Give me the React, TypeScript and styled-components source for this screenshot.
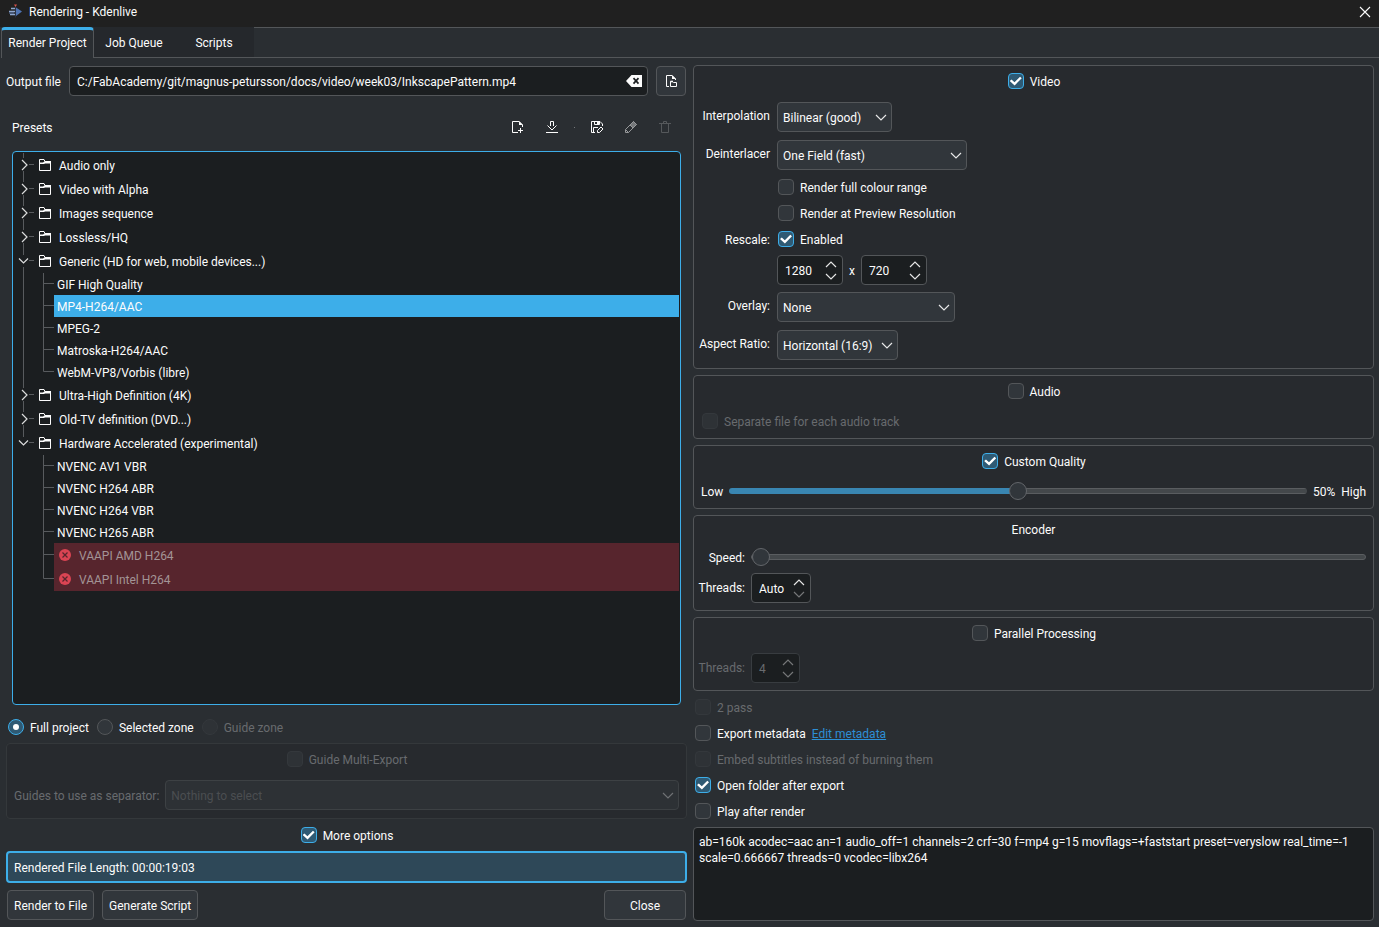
import React from "react";
import styled, { createGlobalStyle, css } from "styled-components";

const c = {
  window: "#2a2e32",
  group: "#272a2e",
  view: "#1b1e20",
  control: "#31363b",
  border: "#535659",
  borderOff: "#383c40",
  text: "#fcfcfc",
  textOff: "#686b6e",
  accent: "#3daee9",
  accentFill: "#2f5a74",
};

const Global = createGlobalStyle`
  *, *::before, *::after { box-sizing: border-box; }
  body { margin: 0; background: ${c.window}; }
  body, button, input, select, textarea {
    font: 12px/16px Roboto, "Noto Sans", sans-serif;
    color: ${c.text};
  }
`;

const Window = styled.div`
  display: flex;
  flex-direction: column;
  min-height: 100vh;
  background: ${c.window};
`;

const TitleBar = styled.header`
  display: flex;
  align-items: center;
  gap: 6px;
  height: 27px;
  padding: 0 8px 4px 8px;
  background: #202020;
`;

const Title = styled.h1`
  flex: 1;
  margin: 0;
  font-size: 12px;
  font-weight: 400;
`;

const IconButton = styled.button`
  display: flex;
  align-items: center;
  justify-content: center;
  padding: 0;
  border: 0;
  background: none;
  color: ${c.text};
`;

const TabBar = styled.nav`
  display: flex;
  height: 31px;
  padding-left: 1px;
`;

const Tab = styled.button<{ $active?: boolean }>`
  min-width: ${(p) => (p.$active ? "93px" : "80px")};
  padding: 2px 6px 0;
  border: 0;
  border-bottom: 1px solid ${c.border};
  background: #25282c;
  white-space: nowrap;
  ${(p) =>
    p.$active &&
    css`
      border: 1px solid ${c.border};
      border-top: 3px solid ${c.accent};
      border-bottom: 0;
      border-radius: 4px 4px 0 0;
      padding: 0 6px 2px;
      background: ${c.window};
    `}
`;

const TabFiller = styled.div`
  flex: 1;
  border-top: 1px solid ${c.border};
  border-bottom: 1px solid ${c.border};
`;

const Main = styled.main`
  flex: 1;
  display: grid;
  grid-template-columns: minmax(0, 1fr) minmax(0, 1fr);
  column-gap: 6px;
  padding: 7px 5px 6px 6px;
`;

const Column = styled.section`
  display: flex;
  flex-direction: column;
`;

/* Text that shares a line with an icon or a tick box sits slightly below its middle. */
const Caption = styled.span`
  padding-top: 2px;
`;

const OutputRow = styled.div`
  display: flex;
  align-items: center;
  gap: 8px;
  padding: 1px 1px 0 0;
  white-space: nowrap;
`;

const PathField = styled.div`
  flex: 1;
  display: flex;
  align-items: center;
  height: 30px;
  padding-right: 5px;
  border: 1px solid ${c.border};
  border-radius: 4px;
  background: ${c.view};
`;

const PathInput = styled.input`
  flex: 1;
  min-width: 0;
  padding: 2px 7px 0;
  border: 0;
  outline: 0;
  background: none;
`;

const PushButton = styled.button<{ $width?: number }>`
  display: flex;
  align-items: center;
  justify-content: center;
  height: 30px;
  min-width: ${(p) => p.$width ?? 30}px;
  padding: 0 6px;
  border: 1px solid ${c.border};
  border-radius: 4px;
  background: ${c.control};
  white-space: nowrap;
`;

const PresetBar = styled.div`
  display: flex;
  align-items: center;
  gap: 4px;
  height: 30px;
  margin: 16px 7px 9px 6px;
`;

const PresetTitle = styled.h2`
  flex: 1;
  margin: 0;
  padding-top: 2px;
  font-size: 12px;
  font-weight: 400;
`;

const ToolButton = styled(IconButton)<{ $tone?: string }>`
  width: 30px;
  height: 30px;
  color: ${(p) => p.$tone ?? c.text};
`;

const ToolDot = styled.span`
  width: 7px;
  display: flex;
  justify-content: center;
  &::before {
    content: "";
    width: 1px;
    height: 1px;
    background: #74777a;
  }
`;

const Tree = styled.ul`
  flex: 1;
  margin: 0 6px;
  padding: 1px;
  list-style: none;
  border: 1px solid ${c.accent};
  border-radius: 4px;
  background: ${c.view};
`;

const TreeRow = styled.li<{ $tall?: boolean }>`
  display: flex;
  height: ${(p) => (p.$tall ? 24 : 22)}px;
`;

const TreeLabel = styled.span<{ $kind: "folder" | "item" | "selected" | "error" }>`
  flex: 1;
  display: flex;
  align-items: center;
  gap: 6px;
  padding-left: 3px;
  ${(p) => p.$kind === "selected" && `background: ${c.accent};`}
  ${(p) => p.$kind === "error" && "background: #57252d; color: #a39496;"}
`;

const Branch = styled.svg`
  flex: none;
  fill: none;
  stroke: #585b5e;
`;

const ZoneRow = styled.div`
  display: flex;
  gap: 7px;
  margin: 13px 0 7px 1px;
`;

const OptionLabel = styled.label<{ $off?: boolean }>`
  display: flex;
  align-items: center;
  gap: 6px;
  height: 18px;
  padding-left: 1px;
  white-space: nowrap;
  color: ${(p) => (p.$off ? c.textOff : c.text)};
`;

const Tick = styled.input`
  appearance: none;
  flex: none;
  display: grid;
  place-items: center;
  width: 16px;
  height: 16px;
  margin: 0;
  border: 1px solid ${c.border};
  border-radius: ${(p) => (p.type === "radio" ? "50%" : "4px")};
  background: ${c.control};
  &:checked {
    border-color: ${c.accent};
    background: ${c.accentFill};
  }
  &:disabled {
    border-color: #34383c;
    background: #2e3236;
  }
  &:checked::before {
    content: "";
    background: #fff;
    ${(p) =>
      p.type === "radio"
        ? "width: 6px; height: 6px; border-radius: 50%;"
        : "width: 12px; height: 10px; clip-path: polygon(0 50%, 15% 35%, 40% 62%, 86% 8%, 100% 22%, 41% 94%);"}
  }
`;

const Group = styled.fieldset<{ $off?: boolean; $bottom?: number }>`
  display: flex;
  flex-direction: column;
  min-width: 0;
  margin: 0 0 6px;
  padding: 6px 7px ${(p) => p.$bottom ?? 8}px;
  border: 1px solid ${(p) => (p.$off ? "#34383b" : c.border)};
  border-radius: 4px;
  background: ${c.group};
`;

const GroupTitle = styled.div<{ $gap?: number }>`
  display: flex;
  justify-content: center;
  margin-bottom: ${(p) => p.$gap ?? 12}px;
`;

const FormRow = styled.div<{ $tight?: boolean }>`
  display: grid;
  grid-template-columns: 69px minmax(0, 1fr);
  column-gap: 7px;
  margin-bottom: ${(p) => (p.$tight ? 7 : 8)}px;
  &:last-child {
    margin-bottom: 0;
  }
`;

const FormLabel = styled.label<{ $line: number }>`
  justify-self: end;
  white-space: nowrap;
  line-height: ${(p) => p.$line}px;
`;

const FormCell = styled.div`
  grid-column: 2;
  display: flex;
  flex-direction: column;
  align-items: flex-start;
  gap: 7px;
`;

const FormRows = styled.div<{ $off?: boolean }>`
  display: grid;
  grid-template-columns: 44px minmax(0, 1fr);
  gap: 7px 6px;
  align-items: center;
  color: ${(p) => (p.$off ? c.textOff : c.text)};
  label {
    justify-self: end;
    white-space: nowrap;
  }
`;

const Inline = styled.div<{ $off?: boolean }>`
  display: flex;
  align-items: center;
  gap: 6px;
  white-space: nowrap;
  color: ${(p) => (p.$off ? c.textOff : c.text)};
`;

const SelectBox = styled.div<{ $width?: number; $off?: boolean }>`
  position: relative;
  display: flex;
  ${(p) => (p.$width ? `width: ${p.$width}px;` : "flex: 1;")}
  color: ${(p) => (p.$off ? "#77797b" : c.text)};
  select {
    appearance: none;
    width: 100%;
    height: 30px;
    padding: 2px 22px 0 5px;
    border: 1px solid ${(p) => (p.$off ? "#3d4144" : c.border)};
    border-radius: 4px;
    background: ${(p) => (p.$off ? "#2d3135" : c.control)};
    color: ${(p) => (p.$off ? "#4b4e51" : c.text)};
    opacity: 1;
  }
  svg {
    position: absolute;
    right: 5px;
    top: 12px;
    pointer-events: none;
  }
`;

const SpinBox = styled.div<{ $width: number; $off?: boolean }>`
  display: flex;
  align-items: center;
  width: ${(p) => p.$width}px;
  height: 30px;
  padding: 0 5px 0 7px;
  border: 1px solid ${(p) => (p.$off ? c.borderOff : c.border)};
  border-radius: 4px;
  background: ${c.view};
  input {
    flex: 1;
    min-width: 0;
    padding: 2px 0 0;
    border: 0;
    outline: 0;
    background: none;
    color: ${(p) => (p.$off ? c.textOff : c.text)};
  }
`;

const SpinArrows = styled.div`
  display: flex;
  flex-direction: column;
  gap: 5px;
`;

const Range = styled.input<{ $fill: number }>`
  appearance: none;
  flex: 1;
  min-width: 0;
  height: 18px;
  margin: 0;
  background: none;
  &::-webkit-slider-runnable-track {
    height: 6px;
    border: 1px solid #5a5d60;
    border-radius: 3px;
    background: #44484b;
    ${(p) =>
      p.$fill > 0 &&
      `border: 0; background: linear-gradient(90deg, #3986b2 ${p.$fill}%, transparent ${p.$fill}%),
        linear-gradient(#5a5d60 1px, #44484b 1px 5px, #5a5d60 5px);`}
  }
  &::-webkit-slider-thumb {
    appearance: none;
    width: 18px;
    height: 18px;
    margin-top: ${(p) => (p.$fill > 0 ? -6 : -7)}px;
    border: 1px solid #63666a;
    border-radius: 50%;
    background: ${c.control};
  }
`;

const Options = styled.div`
  display: flex;
  flex-direction: column;
  gap: 8px;
  margin: 1px 0 7px 1px;
`;

const MetaLink = styled.a`
  padding-top: 2px;
  color: #2d8fd5;
`;

const Params = styled.textarea`
  flex: 1;
  width: 100%;
  min-height: 94px;
  padding: 6px 0 6px 5px;
  resize: none;
  border: 1px solid ${c.border};
  border-radius: 4px;
  outline: 0;
  background: ${c.view};
`;

const Message = styled.output`
  display: flex;
  align-items: center;
  height: 32px;
  margin: 7px 0;
  padding: 0 6px;
  border: 2px solid ${c.accent};
  border-radius: 4px;
  background: #2e4858;
`;

const MoreRow = styled.div`
  display: flex;
  justify-content: center;
  margin-top: 1px;
`;

const Actions = styled.div`
  display: flex;
  gap: 8px;
  padding: 0 1px 1px;
`;

const Spacer = styled.span`
  flex: 1;
`;

const LogoIcon = () => (
  <svg width="15" height="15" viewBox="0 0 15 15" aria-hidden="true">
    <path d="M3 4.5h5M1 7.5h7M2 10.5h6" stroke="#8fa6cc" strokeWidth="1.6" />
    <path d="M1 9h5" stroke="#5670a3" />
    <path d="M8 3.5 14 7.5 8 12z" fill="#4f74b3" />
    <path d="M7.5 2v11.5" stroke="#2c3344" />
    <path d="M6 0.5h3L7.5 3z" fill="#d9534a" />
  </svg>
);

const CloseIcon = () => (
  <svg width="12" height="12" viewBox="0 0 12 12" aria-hidden="true">
    <path d="M1 1 11 11M11 1 1 11" stroke="currentColor" strokeWidth="1.1" />
  </svg>
);

const ClearIcon = () => (
  <svg width="16" height="12" viewBox="0 0 16 12" aria-hidden="true">
    <path d="M5.5 0H16V12H5.5L0 6z" fill="#fcfcfc" />
    <path d="M7.5 3.2 12.5 8.6M12.5 3.2 7.5 8.6" stroke="#1b1e20" strokeWidth="1.7" />
  </svg>
);

const FileFolderIcon = () => (
  <svg width="16" height="16" viewBox="0 0 16 16" fill="none" stroke="currentColor" aria-hidden="true">
    <path d="M6 13.5H3.5V2.5H9L12.5 6V7" />
    <path d="M9 2v4h4z" fill="currentColor" stroke="none" />
    <path d="M7.5 13.5V8.5h2l1 1h3v4z" />
    <path d="M7.5 8.5h2.5" strokeWidth="1.6" />
  </svg>
);

const NewFileIcon = () => (
  <svg width="16" height="16" viewBox="0 0 16 16" fill="none" stroke="currentColor" aria-hidden="true">
    <path d="M8 13.5H2.5V2.5H9L12.5 6V8" />
    <path d="M9 2v4h4z" fill="currentColor" stroke="none" />
    <path d="M10.5 9v5M8 11.5h5" />
  </svg>
);

const ImportIcon = () => (
  <svg width="16" height="16" viewBox="0 0 16 16" fill="none" stroke="currentColor" aria-hidden="true">
    <path d="M6.5 7V2.5h3V7M3.5 6.5 8 11l4.5-4.5M2 13.5h12" />
  </svg>
);

const SaveEditIcon = () => (
  <svg width="16" height="16" viewBox="0 0 16 16" fill="none" stroke="currentColor" aria-hidden="true">
    <path d="M6 13.5H2.5V2.5H11L13.5 5V7" />
    <path d="M5.5 2.5v3h5v-3" />
    <path d="M8 3h2v2H8z" fill="currentColor" stroke="none" />
    <path d="M4.5 13V8.5H9" />
    <path d="M8.5 13.5V11.5L12 8l2 2-3.5 3.5z" />
  </svg>
);

const PencilIcon = () => (
  <svg width="16" height="16" viewBox="0 0 16 16" fill="none" stroke="currentColor" aria-hidden="true">
    <path d="M2.5 13.5V10.5L10.5 2.5l3 3-8 8z" />
    <path d="M7 6 10.5 2.5l3 3L10 9z" fill="currentColor" fillOpacity="0.7" />
    <path d="M2.5 10.5l3 3" />
  </svg>
);

const TrashIcon = () => (
  <svg width="16" height="16" viewBox="0 0 16 16" fill="none" stroke="currentColor" aria-hidden="true">
    <path d="M2 4.5h12M6.5 4V2.5h3V4M4.5 5v8.5h7V5" />
  </svg>
);

const FolderIcon = () => (
  <svg width="16" height="16" viewBox="0 0 16 16" fill="none" stroke="currentColor" aria-hidden="true">
    <path d="M2.5 13.5V2.5H7l1 2h5.5v9z" />
    <path d="M2 7V5.6H6L8 4h6v2.4H8L7 7z" fill="currentColor" stroke="none" />
  </svg>
);

const ErrorIcon = () => (
  <svg width="16" height="16" viewBox="0 0 16 16" aria-hidden="true">
    <circle cx="8" cy="8" r="6" fill="#da4453" />
    <path d="M5.5 5.5l5 5M10.5 5.5l-5 5" stroke="#57252d" strokeWidth="1.2" />
  </svg>
);

const Chevron = ({ up, dim }: { up?: boolean; dim?: boolean }) => (
  <svg width="12" height="7" viewBox="0 0 12 7" fill="none" stroke="currentColor" strokeWidth="1.2" opacity={dim ? 0.4 : 0.9} aria-hidden="true">
    <path d={up ? "M1 6 6 1l5 5" : "M1 1l5 5 5-5"} />
  </svg>
);

const FolderBranch = ({ open, last }: { open?: boolean; last?: boolean }) => (
  <Branch width="20" height="24" aria-hidden="true">
    <path d={open ? "M9.5 0v6M15 11.5h5" : "M9.5 0v5M15 11.5h5"} />
    {!last && <path d="M9.5 18v6" />}
    <path stroke="#dcdddd" strokeWidth="1.2" d={open ? "M5 9.5l4.5 4.5L14 9.5" : "M8 7l5 5-5 5"} />
  </Branch>
);

const ItemBranch = ({ tall, through, last }: { tall?: boolean; through?: boolean; last?: boolean }) => {
  const h = tall ? 24 : 22;
  const mid = h / 2 - 0.5;
  return (
    <Branch width="40" height={h} aria-hidden="true">
      {through && <path d={`M9.5 0v${h}`} />}
      <path d={`M29.5 0v${last ? mid : h}M29.5 ${mid}h10.5`} />
    </Branch>
  );
};

const Check = ({ label, checked, off, type = "checkbox", name }: { label: string; checked?: boolean; off?: boolean; type?: string; name?: string }) => (
  <OptionLabel $off={off}>
    <Tick type={type} name={name} defaultChecked={checked} disabled={off} />
    <Caption>{label}</Caption>
  </OptionLabel>
);

const Combo = ({ id, value, width, off }: { id: string; value: string; width?: number; off?: boolean }) => (
  <SelectBox $width={width} $off={off}>
    <select id={id} disabled={off}>
      <option>{value}</option>
    </select>
    <Chevron />
  </SelectBox>
);

const Spin = ({ id, label, value, width, off, atMin }: { id: string; label?: string; value: string; width: number; off?: boolean; atMin?: boolean }) => (
  <SpinBox $width={width} $off={off}>
    <input id={id} aria-label={label} defaultValue={value} disabled={off} />
    <SpinArrows>
      <IconButton aria-label="Increase" disabled={off}>
        <Chevron up dim={off} />
      </IconButton>
      <IconButton aria-label="Decrease" disabled={off || atMin}>
        <Chevron dim={off || atMin} />
      </IconButton>
    </SpinArrows>
  </SpinBox>
);

interface Preset {
  name: string;
  selected?: boolean;
  error?: boolean;
}

const presetGroups: { name: string; items?: Preset[] }[] = [
  { name: "Audio only" },
  { name: "Video with Alpha" },
  { name: "Images sequence" },
  { name: "Lossless/HQ" },
  {
    name: "Generic (HD for web, mobile devices...)",
    items: [
      { name: "GIF High Quality" },
      { name: "MP4-H264/AAC", selected: true },
      { name: "MPEG-2" },
      { name: "Matroska-H264/AAC" },
      { name: "WebM-VP8/Vorbis (libre)" },
    ],
  },
  { name: "Ultra-High Definition (4K)" },
  { name: "Old-TV definition (DVD...)" },
  {
    name: "Hardware Accelerated (experimental)",
    items: [
      { name: "NVENC AV1 VBR" },
      { name: "NVENC H264 ABR" },
      { name: "NVENC H264 VBR" },
      { name: "NVENC H265 ABR" },
      { name: "VAAPI AMD H264", error: true },
      { name: "VAAPI Intel H264", error: true },
    ],
  },
];

const PresetTree = () => (
  <Tree>
    {presetGroups.map((g, gi) => {
      const lastGroup = gi === presetGroups.length - 1;
      return (
        <React.Fragment key={g.name}>
          <TreeRow $tall>
            <FolderBranch open={!!g.items} last={lastGroup} />
            <TreeLabel $kind="folder">
              <FolderIcon />
              <Caption>{g.name}</Caption>
            </TreeLabel>
          </TreeRow>
          {g.items?.map((it, i) => (
            <TreeRow key={it.name} $tall={it.error}>
              <ItemBranch tall={it.error} through={!lastGroup} last={i === g.items!.length - 1} />
              <TreeLabel $kind={it.error ? "error" : it.selected ? "selected" : "item"}>
                {it.error && <ErrorIcon />}
                <Caption>{it.name}</Caption>
              </TreeLabel>
            </TreeRow>
          ))}
        </React.Fragment>
      );
    })}
  </Tree>
);

export default function App() {
  return (
    <Window>
      <Global />
      <TitleBar>
        <LogoIcon />
        <Title>Rendering - Kdenlive</Title>
        <IconButton aria-label="Close window">
          <CloseIcon />
        </IconButton>
      </TitleBar>
      <TabBar>
        <Tab $active>Render Project</Tab>
        <Tab>Job Queue</Tab>
        <Tab>Scripts</Tab>
        <TabFiller />
      </TabBar>
      <Main>
        <Column>
          <OutputRow>
            <Caption as="label" htmlFor="output">Output file</Caption>
            <PathField>
              <PathInput id="output" defaultValue="C:/FabAcademy/git/magnus-petursson/docs/video/week03/InkscapePattern.mp4" />
              <IconButton aria-label="Clear">
                <ClearIcon />
              </IconButton>
            </PathField>
            <PushButton aria-label="Select output file">
              <FileFolderIcon />
            </PushButton>
          </OutputRow>
          <PresetBar>
            <PresetTitle>Presets</PresetTitle>
            <ToolButton aria-label="New preset"><NewFileIcon /></ToolButton>
            <ToolButton aria-label="Download presets"><ImportIcon /></ToolButton>
            <ToolDot />
            <ToolButton aria-label="Save preset"><SaveEditIcon /></ToolButton>
            <ToolButton aria-label="Edit preset" $tone="#96989a"><PencilIcon /></ToolButton>
            <ToolButton aria-label="Delete preset" $tone="#55585b"><TrashIcon /></ToolButton>
          </PresetBar>
          <PresetTree />
          <ZoneRow>
            <Check type="radio" name="zone" label="Full project" checked />
            <Check type="radio" name="zone" label="Selected zone" />
            <Check type="radio" name="zone" label="Guide zone" off />
          </ZoneRow>
          <Group $off>
            <GroupTitle>
              <Check label="Guide Multi-Export" off />
            </GroupTitle>
            <Inline $off>
              <Caption as="label" htmlFor="guides">Guides to use as separator:</Caption>
              <Combo id="guides" value="Nothing to select" off />
            </Inline>
          </Group>
          <MoreRow>
            <Check label="More options" checked />
          </MoreRow>
          <Message>
            <Caption>Rendered File Length: 00:00:19:03</Caption>
          </Message>
          <Actions>
            <PushButton $width={86}><Caption>Render to File</Caption></PushButton>
            <PushButton $width={94}><Caption>Generate Script</Caption></PushButton>
            <Spacer />
            <PushButton $width={82}><Caption>Close</Caption></PushButton>
          </Actions>
        </Column>

        <Column>
          <Group>
            <GroupTitle>
              <Check label="Video" checked />
            </GroupTitle>
            <FormRow>
              <FormLabel htmlFor="interp" $line={28}>Interpolation</FormLabel>
              <Combo id="interp" value="Bilinear (good)" width={115} />
            </FormRow>
            <FormRow>
              <FormLabel htmlFor="deint" $line={28}>Deinterlacer</FormLabel>
              <Combo id="deint" value="One Field (fast)" width={190} />
            </FormRow>
            <FormRow>
              <FormCell><Check label="Render full colour range" /></FormCell>
            </FormRow>
            <FormRow>
              <FormCell><Check label="Render at Preview Resolution" /></FormCell>
            </FormRow>
            <FormRow $tight>
              <FormLabel htmlFor="rescale-w" $line={20}>Rescale:</FormLabel>
              <FormCell>
                <Check label="Enabled" checked />
                <Inline>
                  <Spin id="rescale-w" value="1280" width={66} />
                  <Caption>x</Caption>
                  <Spin id="rescale-h" label="Rescale height" value="720" width={66} />
                </Inline>
              </FormCell>
            </FormRow>
            <FormRow>
              <FormLabel htmlFor="overlay" $line={28}>Overlay:</FormLabel>
              <Combo id="overlay" value="None" width={178} />
            </FormRow>
            <FormRow>
              <FormLabel htmlFor="aspect" $line={28}>Aspect Ratio:</FormLabel>
              <Combo id="aspect" value="Horizontal (16:9)" width={121} />
            </FormRow>
          </Group>

          <Group>
            <GroupTitle>
              <Check label="Audio" />
            </GroupTitle>
            <Inline $off>
              <Check label="Separate file for each audio track" off />
            </Inline>
          </Group>

          <Group>
            <GroupTitle>
              <Check label="Custom Quality" checked />
            </GroupTitle>
            <Inline>
              <Caption as="label" htmlFor="quality">Low</Caption>
              <Range id="quality" type="range" min={0} max={100} defaultValue={50} $fill={50} />
              <Caption>50%</Caption>
              <Caption>High</Caption>
            </Inline>
          </Group>

          <Group $bottom={7}>
            <GroupTitle $gap={10}>Encoder</GroupTitle>
            <FormRows>
              <Caption as="label" htmlFor="speed">Speed:</Caption>
              <Range id="speed" type="range" min={0} max={10} defaultValue={0} $fill={0} />
              <label htmlFor="threads">Threads:</label>
              <Spin id="threads" value="Auto" width={60} atMin />
            </FormRows>
          </Group>

          <Group $bottom={7}>
            <GroupTitle $gap={11}>
              <Check label="Parallel Processing" />
            </GroupTitle>
            <FormRows $off>
              <label htmlFor="pthreads">Threads:</label>
              <Spin id="pthreads" value="4" width={49} off />
            </FormRows>
          </Group>

          <Options>
            <Check label="2 pass" off />
            <Inline>
              <Check label="Export metadata" />
              <MetaLink href="#metadata">Edit metadata</MetaLink>
            </Inline>
            <Check label="Embed subtitles instead of burning them" off />
            <Check label="Open folder after export" checked />
            <Check label="Play after render" />
          </Options>
          <Params
            aria-label="Encoding parameters"
            defaultValue="ab=160k acodec=aac an=1 audio_off=1 channels=2 crf=30 f=mp4 g=15 movflags=+faststart preset=veryslow real_time=-1 scale=0.666667 threads=0 vcodec=libx264"
          />
        </Column>
      </Main>
    </Window>
  );
}
